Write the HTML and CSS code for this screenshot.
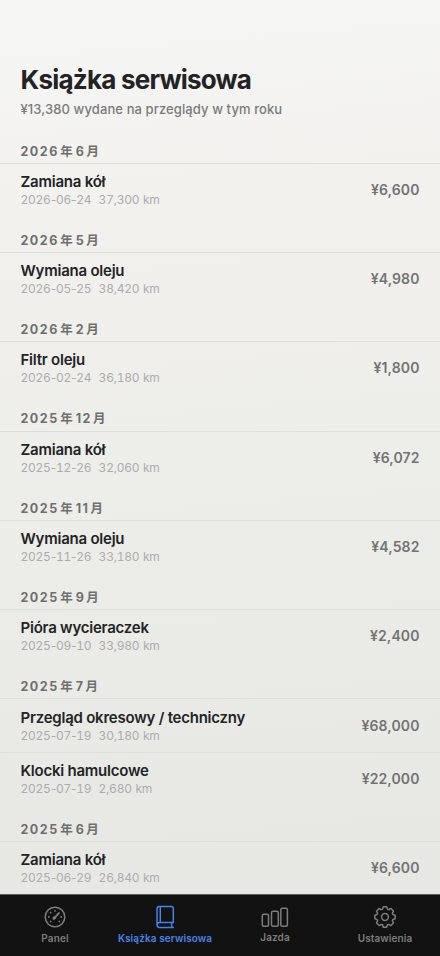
FILE: index.html
```html
<!DOCTYPE html>
<html lang="pl">
<head>
<meta charset="utf-8">
<meta name="viewport" content="width=device-width, initial-scale=1">
<title>Książka serwisowa</title>
<link rel="stylesheet" href="styles.css">
</head>
<body>
<main class="page">
  <header class="top">
    <h1 class="title">Książka serwisowa</h1>
    <p class="summary">¥13,380 wydane na przeglądy w tym roku</p>
  </header>
  <section><h2 class="month">2026<span class="unit">年</span>6<span class="last">月</span></h2>
    <div class="row"><div><div class="name">Zamiana kół</div><div class="meta"><span>2026<i>-</i>06<i>-</i>24</span><span class="km">37,300 km</span></div></div><div class="price">¥6,600</div></div></section>
  <section><h2 class="month">2026<span class="unit">年</span>5<span class="last">月</span></h2>
    <div class="row"><div><div class="name">Wymiana oleju</div><div class="meta"><span>2026<i>-</i>05<i>-</i>25</span><span class="km">38,420 km</span></div></div><div class="price">¥4,980</div></div></section>
  <section><h2 class="month">2026<span class="unit">年</span>2<span class="last">月</span></h2>
    <div class="row"><div><div class="name">Filtr oleju</div><div class="meta"><span>2026<i>-</i>02<i>-</i>24</span><span class="km">36,180 km</span></div></div><div class="price">¥1,800</div></div></section>
  <section><h2 class="month">2025<span class="unit">年</span>12<span class="last">月</span></h2>
    <div class="row"><div><div class="name">Zamiana kół</div><div class="meta"><span>2025<i>-</i>12<i>-</i>26</span><span class="km">32,060 km</span></div></div><div class="price">¥6,072</div></div></section>
  <section><h2 class="month">2025<span class="unit">年</span>11<span class="last">月</span></h2>
    <div class="row"><div><div class="name">Wymiana oleju</div><div class="meta"><span>2025<i>-</i>11<i>-</i>26</span><span class="km">33,180 km</span></div></div><div class="price">¥4,582</div></div></section>
  <section><h2 class="month">2025<span class="unit">年</span>9<span class="last">月</span></h2>
    <div class="row"><div><div class="name">Pióra wycieraczek</div><div class="meta"><span>2025<i>-</i>09<i>-</i>10</span><span class="km">33,980 km</span></div></div><div class="price">¥2,400</div></div></section>
  <section><h2 class="month">2025<span class="unit">年</span>7<span class="last">月</span></h2>
    <div class="row"><div><div class="name">Przegląd okresowy / techniczny</div><div class="meta"><span>2025<i>-</i>07<i>-</i>19</span><span class="km">30,180 km</span></div></div><div class="price">¥68,000</div></div>
    <div class="row"><div><div class="name">Klocki hamulcowe</div><div class="meta"><span>2025<i>-</i>07<i>-</i>19</span><span class="km">2,680 km</span></div></div><div class="price">¥22,000</div></div></section>
  <section><h2 class="month">2025<span class="unit">年</span>6<span class="last">月</span></h2>
    <div class="row"><div><div class="name">Zamiana kół</div><div class="meta"><span>2025<i>-</i>06<i>-</i>29</span><span class="km">26,840 km</span></div></div><div class="price">¥6,600</div></div></section>
</main>
<nav class="tabs">
  <a class="tab">
    <svg class="icon" viewBox="0 0 28 24" fill="none" stroke="currentColor"><circle cx="14" cy="12" r="9.8" stroke-width="1.5"/><path d="M12.8 13.7 17.9 8.1" stroke-width="1.9" stroke-linecap="round"/><circle cx="13.2" cy="13" r="1.3" fill="currentColor" stroke-width=".8"/><g fill="currentColor" stroke="none"><circle cx="14" cy="5.8" r=".9"/><circle cx="9.6" cy="7.6" r=".9"/><circle cx="7.8" cy="12" r=".9"/><circle cx="9.6" cy="16.4" r=".9"/><circle cx="20.2" cy="12" r=".9"/><circle cx="18.4" cy="16.4" r=".9"/></g></svg>
    <span class="label">Panel</span>
  </a>
  <a class="tab active">
    <svg class="icon" viewBox="0 0 28 24" fill="none" stroke="currentColor" stroke-width="1.5" stroke-linejoin="round" stroke-linecap="round"><path d="M22.3 17.6V3.6Q22.3 1.6 20.3 1.6H8.3Q6 1.6 6 4V19.8Q6 22.4 8.5 22.4H22.3M22.3 17.6H8.5Q6 17.6 6 20M9.3 1.8V17.5M21 17.8Q20.1 20.2 21 22.2"/></svg>
    <span class="label">Książka serwisowa</span>
  </a>
  <a class="tab rise">
    <svg class="icon" viewBox="0 0 28 24" fill="none" stroke="currentColor" stroke-width="1.5"><rect x="1.3" y="9.2" width="6.2" height="12" rx="1.5"/><rect x="10.5" y="6.2" width="6.8" height="15" rx="1.5"/><rect x="19.8" y="3.2" width="6.6" height="18" rx="1.5"/></svg>
    <span class="label">Jazda</span>
  </a>
  <a class="tab">
    <svg class="icon" viewBox="0 0 28 24" fill="none" stroke="currentColor" stroke-width="1.5" stroke-linejoin="round"><g transform="translate(14 12)"><path d="M10.14 1.79 9.2 2Q7.9 2.1 7.5 3.1T8.1 5.1L8.44 5.91 5.91 8.44 5.1 8.1Q4.1 7.1 3.1 7.5T2 9.2L1.79 10.14H-1.79L-2 9.2Q-2.1 7.9-3.1 7.5T-5.1 8.1L-5.91 8.44-8.44 5.91-8.1 5.1Q-7.1 4.1-7.5 3.1T-9.2 2L-10.14 1.79V-1.79L-9.2-2Q-7.9-2.1-7.5-3.1T-8.1-5.1L-8.44-5.91-5.91-8.44-5.1-8.1Q-4.1-7.1-3.1-7.5T-2-9.2L-1.79-10.14H1.79L2-9.2Q2.1-7.9 3.1-7.5T5.1-8.1L5.91-8.44 8.44-5.91 8.1-5.1Q7.1-4.1 7.5-3.1T9.2-2L10.14-1.79Z"/><circle r="3.4"/></g></svg>
    <span class="label">Ustawienia</span>
  </a>
</nav>
</body>
</html>
```
FILE: styles.css
```css
* { box-sizing: border-box; }
body {
  margin: 0;
  height: 956px;
  overflow: hidden;
  display: flex;
  flex-direction: column;
  font-family: Inter, "Noto Sans CJK JP", sans-serif;
  color: #232326;
  background: linear-gradient(175deg, #f6f6f4 0%, #f1f0ed 25%, #e8e9e5 80%, #e6e7e3 100%);
}
.page { flex: 1; min-height: 0; overflow: hidden; }
.top { height: 127.2px; padding: 64px 20.5px 0; }
.title { margin: 0; font-size: 26px; line-height: 32px; font-weight: 750; letter-spacing: -0.78px; }
.summary { margin: 5px 0 0; font-size: 13px; line-height: 17px; font-weight: 500; letter-spacing: 0.1px; color: #7b7b7b; }
.month {
  margin: 0;
  height: 35.67px;
  padding: 15.4px 20.5px 0;
  font-size: 12.5px;
  line-height: 18px;
  font-weight: 750;
  letter-spacing: 1.5px;
  color: #6f6f6f;
}
.unit { margin: 0 1.5px; }
.last { margin-left: 1px; }
.row {
  height: 53.62px;
  padding: 8.1px 20.5px 0;
  border-top: 1px solid #dedfda;
  display: flex;
  justify-content: space-between;
}
.name { font-size: 15px; line-height: 19px; font-weight: 600; letter-spacing: -0.23px; }
.meta { display: flex; gap: 7.3px; font-size: 12px; line-height: 17px; letter-spacing: -0.25px; color: #acacac; font-variant-numeric: tabular-nums; }
.meta i { font-style: normal; font-variant-numeric: normal; }
.km { word-spacing: 0.8px; }
.price { padding-top: 8px; font-size: 14px; line-height: 20px; font-weight: 600; letter-spacing: 0.1px; color: #737373; }
.tabs {
  flex: none;
  height: 62px;
  border-top: 1px solid #5b5b5a;
  background: #121212;
  display: grid;
  grid-template-columns: repeat(4, 1fr);
}
.tab { display: flex; flex-direction: column; align-items: center; padding-top: 10px; color: #7d7d7d; }
.icon { width: 28px; height: 24px; }
.label { margin-top: 2px; font-size: 10px; line-height: 14px; font-weight: 600; letter-spacing: 0.1px; white-space: nowrap; }
.active { color: #4484ea; }
.rise .label { margin-top: 1px; }
```
